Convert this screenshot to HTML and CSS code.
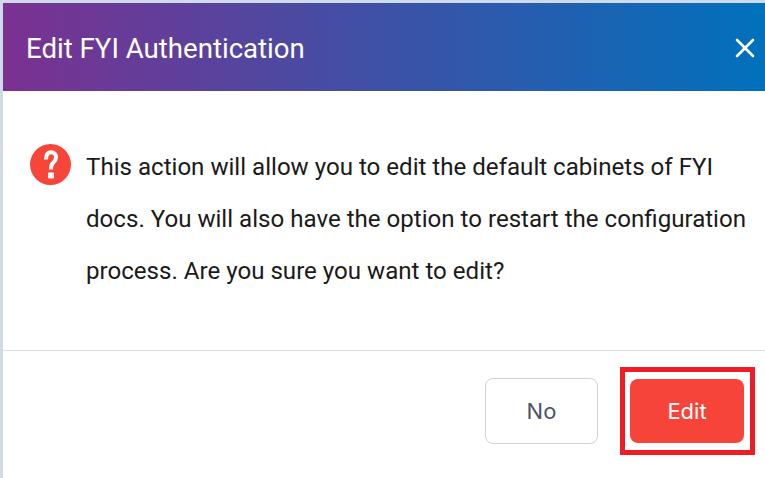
FILE: index.html
```html
<!DOCTYPE html>
<html lang="en">
<head>
    <meta charset="UTF-8">
    <title>Edit FYI Authentication</title>
    <link rel="stylesheet" href="styles.css">
</head>
<body>
    <div class="dialog">
        <div class="dialog-header">
            <h1>Edit FYI Authentication</h1>
            <svg class="close-icon" width="20" height="20" viewBox="0 0 20 20">
                <path d="M2 2L18 18M18 2L2 18" stroke="#fff" stroke-width="2.6" stroke-linecap="round"/>
            </svg>
        </div>
        <div class="dialog-body">
            <svg class="help-icon" width="41" height="41" viewBox="0 0 41 41">
                <circle cx="20.5" cy="20.5" r="20.5" fill="#f8453a"/>
                <path d="M16 15.5C16 10.8 18 8.3 21.2 8.3C24.4 8.3 26 10.6 26 13.5C26 16.5 24.3 17.8 22.8 19.2C21.5 20.4 21 21.5 21 25.5" fill="none" stroke="#fff" stroke-width="4"/>
                <rect x="18" y="28.6" width="6" height="6" rx="0.8" fill="#fff"/>
            </svg>
            <p>This action will allow you to edit the default cabinets of FYI docs. You will also have the option to restart the configuration process. Are you sure you want to edit?</p>
        </div>
        <div class="dialog-footer">
            <button class="btn btn-no">No</button>
            <div class="highlight">
                <button class="btn btn-edit">Edit</button>
            </div>
        </div>
    </div>
</body>
</html>
```

FILE: styles.css
```css
/* Page behind the dialog */
body {
    margin: 0;
    padding: 3px 0 0 3px;
    height: 478px;
    box-sizing: border-box;
    overflow: hidden;
    background: #cfdaeb;
    font-family: "Roboto", sans-serif;
}

.dialog {
    height: 475px;
    background: #ffffff;
    display: flex;
    flex-direction: column;
}

/* Header */
.dialog-header {
    height: 88px;
    flex-shrink: 0;
    display: flex;
    align-items: center;
    justify-content: space-between;
    padding: 0 10px 0 23px;
    background: linear-gradient(to right, #7b3191, #0071bc);
}

.dialog-header h1 {
    margin: 2px 0 0;
    color: #ffffff;
    font-size: 27.6px;
    font-weight: 400;
}

.close-icon {
    margin-top: 2px;
}

/* Body */
.dialog-body {
    height: 260px;
    box-sizing: border-box;
    flex-shrink: 0;
    display: flex;
    align-items: flex-start;
    padding: 53px 14px 0 27px;
    border-bottom: 1px solid #dfdfe3;
}

.help-icon {
    flex-shrink: 0;
    margin-right: 15px;
}

.dialog-body p {
    margin: 0;
    color: #1a1a1a;
    font-size: 24.1px;
    line-height: 52px;
    margin-top: -3px;
}

/* Footer */
.dialog-footer {
    display: flex;
    justify-content: flex-end;
    align-items: center;
    gap: 22px;
    padding: 16px 10px 0 0;
}

.btn {
    font-family: "Inter", sans-serif;
    font-size: 22px;
    border-radius: 8px;
    cursor: pointer;
}

.btn-no {
    width: 113px;
    height: 66px;
    margin-left: 1px;
    background: #ffffff;
    color: #4d5368;
    border: 1px solid #d0d1da;
}

.btn-edit {
    width: 114px;
    height: 64px;
    background: #f6443a;
    color: #ffffff;
    border: none;
}

.highlight {
    border: 5px solid #ee1c25;
    padding: 7px 6px 7px 5px;
    line-height: 0;
}
```
